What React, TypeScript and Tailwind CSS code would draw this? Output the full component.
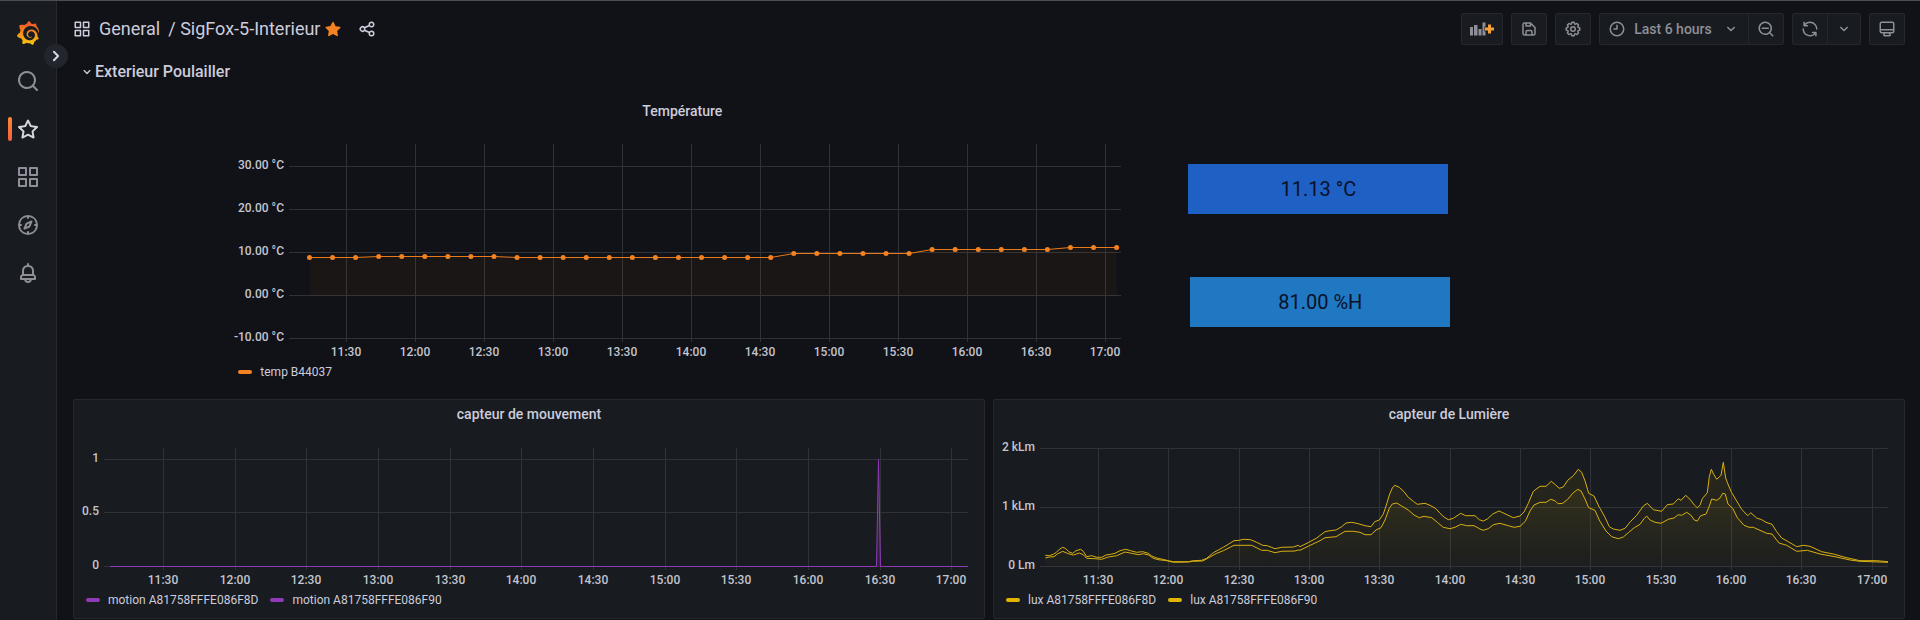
import type { ReactNode } from "react";
import { SiGrafana } from "react-icons/si";

const ICONS = {
  apps: "M10,13H3a1,1,0,0,0-1,1v7a1,1,0,0,0,1,1h7a1,1,0,0,0,1-1V14A1,1,0,0,0,10,13ZM9,20H4V15H9ZM21,2H14a1,1,0,0,0-1,1v7a1,1,0,0,0,1,1h7a1,1,0,0,0,1-1V3A1,1,0,0,0,21,2ZM20,9H15V4h5Zm1,4H14a1,1,0,0,0-1,1v7a1,1,0,0,0,1,1h7a1,1,0,0,0,1-1V14A1,1,0,0,0,21,13Zm-1,7H15V15h5ZM10,2H3A1,1,0,0,0,2,3v7a1,1,0,0,0,1,1h7a1,1,0,0,0,1-1V3A1,1,0,0,0,10,2ZM9,9H4V4H9Z",
  search: "M21.71,20.29,18,16.61A9,9,0,1,0,16.61,18l3.68,3.68a1,1,0,0,0,1.42,0A1,1,0,0,0,21.71,20.29ZM11,18a7,7,0,1,1,7-7A7,7,0,0,1,11,18Z",
  star: "M22,9.67A1,1,0,0,0,21.14,9l-5.69-.83L12.9,3a1,1,0,0,0-1.8,0L8.55,8.16,2.86,9a1,1,0,0,0-.81.68,1,1,0,0,0,.25,1l4.13,4-1,5.68A1,1,0,0,0,6.9,21.44L12,18.77l5.1,2.67a.93.93,0,0,0,.46.12,1,1,0,0,0,.59-.19,1,1,0,0,0,.4-1l-1-5.68,4.13-4A1,1,0,0,0,22,9.67Zm-6.15,4a1,1,0,0,0-.29.88l.72,4.2-3.76-2a1.06,1.06,0,0,0-.94,0l-3.76,2,.72-4.2a1,1,0,0,0-.29-.88l-3-3,4.21-.61a1,1,0,0,0,.76-.55L12,5.7l1.88,3.82a1,1,0,0,0,.76.55l4.21.61Z",
  favorite: "M22,9.67A1,1,0,0,0,21.14,9l-5.69-.83L12.9,3a1,1,0,0,0-1.8,0L8.55,8.16,2.86,9a1,1,0,0,0-.81.68,1,1,0,0,0,.25,1l4.13,4-1,5.68A1,1,0,0,0,6.9,21.44L12,18.77l5.1,2.67a.93.93,0,0,0,.46.12,1,1,0,0,0,.59-.19,1,1,0,0,0,.4-1l-1-5.68,4.13-4A1,1,0,0,0,22,9.67Z",
  compass: "M12,2A10,10,0,1,0,22,12,10,10,0,0,0,12,2Zm1,17.93V19a1,1,0,0,0-2,0v.93A8,8,0,0,1,4.07,13H5a1,1,0,0,0,0-2H4.07A8,8,0,0,1,11,4.07V5a1,1,0,0,0,2,0V4.07A8,8,0,0,1,19.93,11H19a1,1,0,0,0,0,2h.93A8,8,0,0,1,13,19.93ZM15.14,7.55l-5,2.12a1,1,0,0,0-.52.52l-2.12,5a1,1,0,0,0,.21,1.1,1,1,0,0,0,.7.29.93.93,0,0,0,.4-.08l5-2.12a1,1,0,0,0,.52-.52l2.12-5a1,1,0,0,0-1.31-1.31Zm-2.49,5.1-2.28,1,1-2.28,2.28-1Z",
  bell: "M18,13.18V10a6,6,0,0,0-5-5.91V3a1,1,0,0,0-2,0V4.09A6,6,0,0,0,6,10v3.18A3,3,0,0,0,4,16v2a1,1,0,0,0,1,1H8.14a4,4,0,0,0,7.72,0H19a1,1,0,0,0,1-1V16A3,3,0,0,0,18,13.18ZM8,10a4,4,0,0,1,8,0v3H8Zm4,10a2,2,0,0,1-1.72-1h3.44A2,2,0,0,1,12,20Zm6-3H6V16a1,1,0,0,1,1-1H17a1,1,0,0,1,1,1Z",
  angleDown: "M17,9.17a1,1,0,0,0-1.41,0L12,12.71,8.46,9.17a1,1,0,0,0-1.41,0,1,1,0,0,0,0,1.42l4.24,4.24a1,1,0,0,0,1.42,0L17,10.59A1,1,0,0,0,17,9.17Z",
  angleRight: "M14.83,11.29,10.59,7.05a1,1,0,0,0-1.42,0,1,1,0,0,0,0,1.41L12.71,12,9.17,15.54a1,1,0,0,0,0,1.41,1,1,0,0,0,.71.29,1,1,0,0,0,.71-.29l4.24-4.24A1,1,0,0,0,14.83,11.29Z",
  share: "M18,14a4,4,0,0,0-3.08,1.48l-5.1-2.35a3.64,3.64,0,0,0,0-2.26l5.1-2.35A4,4,0,1,0,14,6a4.17,4.17,0,0,0,.07.71L8.79,9.14a4,4,0,1,0,0,5.72l5.28,2.43A4.17,4.17,0,0,0,14,18a4,4,0,1,0,4-4ZM18,4a2,2,0,1,1-2,2A2,2,0,0,1,18,4ZM6,14a2,2,0,1,1,2-2A2,2,0,0,1,6,14Zm12,6a2,2,0,1,1,2-2A2,2,0,0,1,18,20Z",
  save: "M20.71,9.29l-6-6a1,1,0,0,0-.32-.21A1.09,1.09,0,0,0,14,3H6A3,3,0,0,0,3,6V18a3,3,0,0,0,3,3H18a3,3,0,0,0,3-3V10A1,1,0,0,0,20.71,9.29ZM9,5h4V7H9Zm6,14H9V16a1,1,0,0,1,1-1h4a1,1,0,0,1,1,1Zm4-1a1,1,0,0,1-1,1H17V16a3,3,0,0,0-3-3H10a3,3,0,0,0-3,3v3H6a1,1,0,0,1-1-1V6A1,1,0,0,1,6,5H7V8A1,1,0,0,0,8,9h6a1,1,0,0,0,1-1V6.41l4,4Z",
  cog: "M21.32,9.55l-1.89-.63.89-1.78A1,1,0,0,0,20.13,6L18,3.87a1,1,0,0,0-1.15-.19l-1.78.89-.63-1.89A1,1,0,0,0,13.5,2h-3a1,1,0,0,0-.95.68L8.92,4.57,7.14,3.68A1,1,0,0,0,6,3.87L3.87,6a1,1,0,0,0-.19,1.15l.89,1.78-1.89.63A1,1,0,0,0,2,10.5v3a1,1,0,0,0,.68.95l1.89.63-.89,1.78A1,1,0,0,0,3.87,18L6,20.13a1,1,0,0,0,1.15.19l1.78-.89.63,1.89a1,1,0,0,0,.95.68h3a1,1,0,0,0,.95-.68l.63-1.89,1.78.89A1,1,0,0,0,18,20.13L20.13,18a1,1,0,0,0,.19-1.15l-.89-1.78,1.89-.63A1,1,0,0,0,22,13.5v-3A1,1,0,0,0,21.32,9.55ZM20,12.78l-1.2.4A2,2,0,0,0,17.64,16l.57,1.14-1.1,1.1L16,17.64a2,2,0,0,0-2.79,1.16l-.4,1.2H11.22l-.4-1.2A2,2,0,0,0,8,17.64l-1.14.57-1.1-1.1L6.36,16A2,2,0,0,0,5.2,13.18L4,12.78V11.22l1.2-.4A2,2,0,0,0,6.36,8L5.79,6.89l1.1-1.1L8,6.36A2,2,0,0,0,10.82,5.2l.4-1.2h1.56l.4,1.2A2,2,0,0,0,16,6.36l1.14-.57,1.1,1.1L17.64,8a2,2,0,0,0,1.16,2.79l1.2.4ZM12,8a4,4,0,1,0,4,4A4,4,0,0,0,12,8Zm0,6a2,2,0,1,1,2-2A2,2,0,0,1,12,14Z",
  clock: "M12,2A10,10,0,1,0,22,12,10,10,0,0,0,12,2Zm0,18a8,8,0,1,1,8-8A8,8,0,0,1,12,20ZM12,6a1,1,0,0,0-1,1v4H8a1,1,0,0,0,0,2h4a1,1,0,0,0,1-1V7A1,1,0,0,0,12,6Z",
  zoomOut: "M21.71,20.29,18,16.61A9,9,0,1,0,16.61,18l3.68,3.68a1,1,0,0,0,1.42,0A1,1,0,0,0,21.71,20.29ZM11,18a7,7,0,1,1,7-7A7,7,0,0,1,11,18Zm4-8H7a1,1,0,0,0,0,2h8a1,1,0,0,0,0-2Z",
  sync: "M19.91,15.51H15.38a1,1,0,0,0,0,2h2.4A8,8,0,0,1,4,12a1,1,0,0,0-2,0,10,10,0,0,0,16.88,7.23V21a1,1,0,0,0,2,0V16.5A1,1,0,0,0,19.91,15.51ZM12,2A10,10,0,0,0,5.12,4.77V3a1,1,0,0,0-2,0V7.5a1,1,0,0,0,1,1h4.5a1,1,0,0,0,0-2H6.22A8,8,0,0,1,20,12a1,1,0,0,0,2,0A10,10,0,0,0,12,2Z",
  monitor: "M19,2H5A3,3,0,0,0,2,5V15a3,3,0,0,0,3,3H7.64l-.58,1a2,2,0,0,0,0,2,2,2,0,0,0,1.75,1h6.46A2,2,0,0,0,17,21a2,2,0,0,0,0-2l-.59-1H19a3,3,0,0,0,3-3V5A3,3,0,0,0,19,2ZM8.77,20,10,18H14l1.2,2ZM20,15a1,1,0,0,1-1,1H5a1,1,0,0,1-1-1V14H20Zm0-3H4V5A1,1,0,0,1,5,4H19a1,1,0,0,1,1,1Z",
};

function Icon({ name, className = "size-[18px]" }: { name: keyof typeof ICONS; className?: string }) {
  return (
    <svg viewBox="0 0 24 24" fill="currentColor" className={`shrink-0 ${className}`} aria-hidden="true">
      <path d={ICONS[name]} />
    </svg>
  );
}

function AddPanelIcon() {
  return (
    <svg viewBox="0 0 24 16" className="h-4 w-6" aria-hidden="true">
      <path d="M0 6h3v8.500H0zM4 4h3.500v10.500H4zM8.500 8h3v6.500h-3zM12.500 1.500h3v4h-1v5h1v4h-3z" fill="#8e8f98" />
      <path d="M18 3.500h3v3h3v3h-3v3h-3v-3h-3v-3h3z" fill="#f7a035" />
    </svg>
  );
}

type Tick = { at: number; label: string };

const TIMES = ["11:30", "12:00", "12:30", "13:00", "13:30", "14:00", "14:30", "15:00", "15:30", "16:00", "16:30", "17:00"];
const timeTicks = (xs: number[]): Tick[] => xs.map((at, i) => ({ at, label: TIMES[i] }));

type ChartProps = {
  label: string;
  width: number;
  height: number;
  top: number;
  left: number;
  right: number;
  bottom: number;
  labelRight: number;
  xTicks: Tick[];
  yTicks: Tick[];
  children: ReactNode;
};

function Chart({ label, width, height, top, left, right, bottom, labelRight, xTicks, yTicks, children }: ChartProps) {
  return (
    <svg viewBox={`0 0 ${width} ${height}`} role="img" aria-label={label} className="block h-auto w-full">
      <g stroke="#303237" strokeWidth="1" shapeRendering="crispEdges">
        {yTicks.map((t) => (
          <line key={t.label} x1={left} x2={right} y1={t.at + 0.5} y2={t.at + 0.5} />
        ))}
        {xTicks.map((t) => (
          <line key={t.label} x1={t.at + 0.5} x2={t.at + 0.5} y1={top} y2={bottom} />
        ))}
      </g>
      <g fill="#c4c5cf" className="text-[12px] font-medium">
        {yTicks.map((t) => (
          <text key={t.label} x={labelRight} y={t.at + 3} textAnchor="end">
            {t.label}
          </text>
        ))}
        {xTicks.map((t) => (
          <text key={t.label} x={t.at} y={bottom + 14} textAnchor="middle">
            {t.label}
          </text>
        ))}
      </g>
      {children}
    </svg>
  );
}

function Legend({ color, items }: { color: string; items: string[] }) {
  return (
    <ul className="flex h-[22px] items-center gap-3 px-3 text-[12px]">
      {items.map((item) => (
        <li key={item}>
          <button type="button" className="flex items-center gap-2">
            <span className={`h-1 w-[14px] rounded-[2px] ${color}`} />
            {item}
          </button>
        </li>
      ))}
    </ul>
  );
}

type Point = [number, number];
const toPath = (points: Point[]) => "M" + points.map(([x, y]) => `${x.toFixed(1)},${y.toFixed(1)}`).join("L");
const toArea = (points: Point[], base: number) =>
  `${toPath(points)}L${points[points.length - 1][0]},${base}L${points[0][0]},${base}Z`;

// Ten-minute readings, grouped as [plot height, number of samples].
const TEMP_RUNS: Point[] = [[132.5, 3], [131.5, 6], [132.5, 12], [128.5, 6], [124.5, 6], [122.5, 3]];
const TEMP_POINTS: Point[] = TEMP_RUNS.flatMap(([y, n]) => Array<number>(n).fill(y)).map((y, i) => [83.5 + i * 23.06, y]);

// Light samples are stored in thirds of a plot unit, in three consecutive blocks.
const block = (dx: number, dy: number, data: Point[]): Point[] => data.map(([x, y]) => [(x + dx) / 3, (y + dy) / 3]);

const LUX_HIGH: Point[] = [
  ...block(-42, -150, [[196,496],[208,497],[220,493],[228,488],[238,478],[248,472],[256,475],[266,485],[278,490],[288,482],[302,478],[310,484],[320,500],[335,497],[350,502],[365,502],[378,495],[392,493],[405,490],[420,482],[437,478],[452,482],[470,487],[488,485],[505,490],[515,498],[530,504],[548,508],[565,512],[580,515],[625,515],[640,512],[665,511],[680,505],[700,488],[715,480],[730,472],[745,463],[762,452],[778,451],[790,448],[812,449],[830,457],[848,466],[862,467],[885,476],[905,472],[940,471],[955,466]]),
  ...block(918, -30, [[0,350],[28,336],[50,324],[75,305],[90,302],[108,300],[125,290],[138,279],[155,277],[175,281],[195,287],[213,290],[224,275],[238,270],[250,252],[260,222],[268,195],[277,174],[284,166],[298,172],[312,185],[325,202],[340,214],[352,223],[375,220],[390,226],[408,236],[420,250],[432,261],[445,269],[460,265],[482,250],[497,257],[525,257],[538,269],[550,273],[562,267],[578,252],[597,243],[612,250],[640,263],[660,258],[672,246],[685,220],[700,184],[720,169],[738,169],[754,154],[766,164],[778,175],[790,171],[803,151],[820,137],[835,118],[845,127],[856,155],[866,190],[882,198],[898,232]]),
  ...block(1818, -30, [[0,235],[15,262],[28,290],[40,297],[60,301],[75,295],[92,274],[110,256],[130,228],[142,220],[160,239],[185,244],[202,224],[220,222],[235,206],[243,211],[257,196],[270,208],[283,225],[292,233],[300,226],[307,206],[322,188],[328,140],[334,118],[341,133],[350,148],[363,136],[370,97],[377,144],[385,165],[395,188],[410,213],[425,238],[443,257],[452,248],[470,264],[485,269],[498,277],[516,283],[530,305],[545,324],[565,335],[590,350],[610,346],[630,349],[665,365],[700,372],[735,382],[780,392],[830,392],[864,395]]),
];

const LUX_LOW: Point[] = [
  ...block(-42, -150, [[196,504],[208,501],[222,500],[232,492],[248,484],[262,490],[280,495],[298,489],[310,494],[320,505],[345,506],[365,508],[385,501],[410,497],[435,486],[455,490],[475,494],[490,491],[506,495],[520,505],[535,509],[560,512],[580,517],[625,516],[640,514],[668,513],[690,501],[710,490],[730,482],[762,466],[815,466],[845,481],[862,481],[885,488],[905,484],[945,483],[955,480]]),
  ...block(918, -30, [[0,361],[28,347],[60,332],[75,323],[108,320],[135,304],[160,304],[180,307],[195,314],[213,314],[228,300],[243,293],[255,270],[268,235],[277,222],[290,219],[305,228],[325,240],[342,255],[358,263],[372,259],[395,263],[412,277],[430,292],[450,296],[465,292],[482,283],[500,287],[522,287],[540,297],[550,301],[565,296],[580,284],[600,280],[625,287],[642,292],[660,289],[676,274],[690,243],[702,225],[720,217],[738,217],[752,208],[765,212],[774,221],[788,220],[803,208],[818,190],[833,178],[843,183],[855,207],[866,233],[885,241],[898,270]]),
  ...block(1818, -30, [[0,274],[18,303],[35,320],[55,326],[70,321],[85,308],[103,293],[120,283],[132,266],[140,258],[150,270],[165,277],[183,280],[205,268],[222,264],[235,254],[245,256],[260,247],[272,255],[283,270],[292,273],[302,257],[318,252],[326,233],[335,207],[350,211],[360,204],[368,190],[376,192],[384,222],[398,235],[412,263],[432,286],[447,292],[460,292],[480,301],[500,310],[516,312],[537,339],[560,346],[590,364],[622,361],[660,372],[705,380],[750,390],[780,394],[864,397]]),
];

function PanelTitle({ children }: { children: ReactNode }) {
  return <h2 className="flex h-7 items-center justify-center text-[14px] font-medium">{children}</h2>;
}

function Panel({ title, children }: { title: string; children: ReactNode }) {
  return (
    <section className="rounded-[2px] border border-[#25272c] bg-[#181b1f] pb-[7px]">
      <PanelTitle>{title}</PanelTitle>
      <div className="pt-3">{children}</div>
    </section>
  );
}

const NAV: { icon: keyof typeof ICONS; label: string; active?: boolean }[] = [
  { icon: "search", label: "Search dashboards" },
  { icon: "star", label: "Starred", active: true },
  { icon: "apps", label: "Dashboards" },
  { icon: "compass", label: "Explore" },
  { icon: "bell", label: "Alerting" },
];

function Sidebar() {
  return (
    <nav className="relative flex w-[57px] shrink-0 flex-col border-r border-[#25272c] bg-[#181b1f] pt-2">
      <a href="#home" aria-label="Home" className="flex h-12 items-center justify-center">
        <svg className="absolute size-0" aria-hidden="true">
          <linearGradient id="logo-fill" x1="0" y1="0" x2="0" y2="1">
            <stop offset="0.1" stopColor="#f05a28" />
            <stop offset="1" stopColor="#fbca0a" />
          </linearGradient>
        </svg>
        <SiGrafana className="size-6" fill="url(#logo-fill)" />
      </a>
      {NAV.map((item) => (
        <a
          key={item.icon}
          href={`#${item.icon}`}
          aria-label={item.label}
          className={`relative flex h-12 items-center justify-center ${item.active ? "text-[#d5d6de]" : "text-[#8e8f98]"}`}
        >
          {item.active && (
            <span className="absolute top-3 left-2 h-6 w-1 rounded-[2px] bg-linear-to-b from-[#ff8833] to-[#f55f3e]" />
          )}
          <Icon name={item.icon} className="size-6" />
        </a>
      ))}
      <button
        type="button"
        aria-label="Expand menu"
        className="absolute top-[43px] -right-3 z-10 flex size-6 items-center justify-center rounded-full bg-[#22252b] text-[#d5d6de]"
      >
        <Icon name="angleRight" className="size-6" />
      </button>
    </nav>
  );
}

function ToolButton({ label, className = "w-9", children }: { label?: string; className?: string; children: ReactNode }) {
  return (
    <button
      type="button"
      aria-label={label}
      className={`flex h-8 items-center justify-center border border-[#25272c] bg-[#181b1f] text-[#8e8f98] ${className}`}
    >
      {children}
    </button>
  );
}

function Header() {
  return (
    <header className="flex h-14 items-center justify-between">
      <div className="flex items-center text-[18px] leading-6">
        <Icon name="apps" />
        <h1 className="ml-2 flex">
          <a href="#general">General</a>
          <span className="ml-2 whitespace-pre">/ </span>
          <a href="#dashboard">SigFox-5-Interieur</a>
        </h1>
        <button type="button" aria-label="Unmark as favorite" className="ml-1 text-[#f58220]">
          <Icon name="favorite" />
        </button>
        <button type="button" aria-label="Share dashboard" className="ml-4">
          <Icon name="share" />
        </button>
      </div>
      <div className="flex gap-2">
        <ToolButton label="Add panel" className="w-[42px] rounded-[2px]">
          <AddPanelIcon />
        </ToolButton>
        <ToolButton label="Save dashboard" className="w-9 rounded-[2px]">
          <Icon name="save" />
        </ToolButton>
        <ToolButton label="Dashboard settings" className="w-9 rounded-[2px]">
          <Icon name="cog" />
        </ToolButton>
        <div className="flex">
          <ToolButton className="w-[150px] rounded-l-[2px] text-[14px] font-medium">
            <Icon name="clock" />
            <span className="mr-[10px] ml-2">Last 6 hours</span>
            <Icon name="angleDown" />
          </ToolButton>
          <ToolButton label="Zoom out time range" className="-ml-px w-9 rounded-r-[2px]">
            <Icon name="zoomOut" />
          </ToolButton>
        </div>
        <div className="flex">
          <ToolButton label="Refresh dashboard" className="w-9 rounded-l-[2px]">
            <Icon name="sync" />
          </ToolButton>
          <ToolButton label="Choose refresh interval" className="-ml-px w-[34px] rounded-r-[2px]">
            <Icon name="angleDown" />
          </ToolButton>
        </div>
        <ToolButton label="Cycle view mode" className="w-9 rounded-[2px]">
          <Icon name="monitor" />
        </ToolButton>
      </div>
    </header>
  );
}

export default function App() {
  return (
    <div className="flex min-h-screen border-t border-[#4b4d52] bg-[#111217] font-[Roboto,sans-serif] text-[#ccccdc]">
      <Sidebar />
      <main className="min-w-0 flex-1 pr-[15px] pl-4">
        <Header />
        <button type="button" className="flex h-[30px] items-center pl-[6px] text-[16px] font-medium">
          <Icon name="angleDown" className="size-4" />
          <span>Exterieur Poulailler</span>
        </button>

        <div className="grid grid-cols-24 gap-x-2">
          <section className="col-span-12 col-start-3 pt-[10px] pb-4">
            <PanelTitle>Température</PanelTitle>
            <Chart
              label="Température"
              width={912}
              height={236}
              top={19}
              left={63}
              right={895}
              bottom={217}
              labelRight={58}
              xTicks={timeTicks([120, 189, 258, 327, 396, 465, 534, 603, 672, 741, 810, 879])}
              yTicks={[
                { at: 41, label: "30.00 °C" },
                { at: 84, label: "20.00 °C" },
                { at: 127, label: "10.00 °C" },
                { at: 170, label: "0.00 °C" },
                { at: 213, label: "-10.00 °C" },
              ]}
            >
              <path d={toArea(TEMP_POINTS, 170.5)} fill="#ff780a" fillOpacity="0.04" />
              <path d={toPath(TEMP_POINTS)} fill="none" stroke="#e87a1c" strokeWidth="1" />
              {TEMP_POINTS.map(([x, y]) => (
                <circle key={x} cx={x} cy={y} r="2.5" fill="#f58220" />
              ))}
            </Chart>
            <Legend color="bg-[#f58220]" items={["temp B44037"]} />
          </section>

          <div className="col-span-5 col-start-15 flex flex-col gap-[63px] pt-[77px] text-[20px] text-[#0a1028]">
            <div className="ml-[42px] flex h-[50px] w-[260px] items-center justify-center bg-[#1f60c4]">11.13 °C</div>
            <div className="ml-11 flex h-[50px] w-[260px] items-center justify-center bg-[#1f78c1]">81.00 %H</div>
          </div>
        </div>

        <div className="grid grid-cols-2 gap-2">
          <Panel title="capteur de mouvement">
            <Chart
              label="capteur de mouvement"
              width={910}
              height={149}
              top={8}
              left={30}
              right={894}
              bottom={130}
              labelRight={25}
              xTicks={timeTicks([89, 161, 232, 304, 376, 447, 519, 591, 662, 734, 806, 877])}
              yTicks={[
                { at: 19, label: "1" },
                { at: 72, label: "0.5" },
                { at: 126, label: "0" },
              ]}
            >
              <path
                d="M36 126.500H802.500L804.500 19.500L806.500 126.500H894"
                fill="#8f3bb8"
                fillOpacity="0.2"
                stroke="#8f3bb8"
                strokeWidth="1"
              />
            </Chart>
            <Legend color="bg-[#8f3bb8]" items={["motion A81758FFFE086F8D", "motion A81758FFFE086F90"]} />
          </Panel>

          <Panel title="capteur de Lumière">
            <Chart
              label="capteur de Lumière"
              width={910}
              height={149}
              top={8}
              left={46}
              right={894}
              bottom={130}
              labelRight={41}
              xTicks={timeTicks([104, 174, 245, 315, 385, 456, 526, 596, 667, 737, 807, 878])}
              yTicks={[
                { at: 8, label: "2 kLm" },
                { at: 67, label: "1 kLm" },
                { at: 126, label: "0 Lm" },
              ]}
            >
              <defs>
                <linearGradient id="lux-fill" gradientUnits="userSpaceOnUse" x1="0" y1="8" x2="0" y2="126">
                  <stop offset="0" stopColor="#e0b400" stopOpacity="0.1" />
                  <stop offset="1" stopColor="#e0b400" stopOpacity="0.01" />
                </linearGradient>
              </defs>
              {[LUX_HIGH, LUX_LOW].map((series, i) => (
                <g key={i}>
                  <path d={toArea(series, 126.5)} fill="url(#lux-fill)" />
                  <path d={toPath(series)} fill="none" stroke="#d9b010" strokeWidth="1" strokeLinejoin="round" />
                </g>
              ))}
            </Chart>
            <Legend color="bg-[#e0b400]" items={["lux A81758FFFE086F8D", "lux A81758FFFE086F90"]} />
          </Panel>
        </div>
      </main>
    </div>
  );
}
